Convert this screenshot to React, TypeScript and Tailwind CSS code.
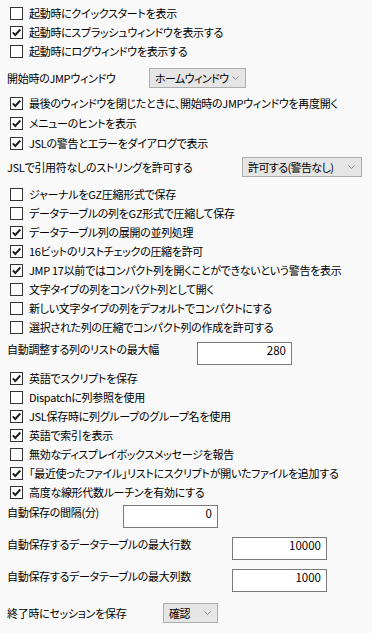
import React from "react";

const Chevron = () => (
  <svg width="7" height="4" viewBox="0 0 7 4" className="shrink-0">
    <path d="M0.5 0.5 L3.5 3.5 L6.5 0.5" fill="none" stroke="#8a8a8a" strokeWidth="1" />
  </svg>
);

const Check = ({ checked, label, h = "h-[19px]" }: { checked?: boolean; label: string; h?: string }) => (
  <div className={`${h} flex items-center pl-[10px] gap-[6px]`}>
    <div className="w-[13px] h-[13px] border border-[#333333] bg-white flex items-center justify-center shrink-0">
      {checked && (
        <svg width="11" height="11" viewBox="0 0 11 11">
          <path d="M1.8 5.4 L4.3 8 L9.3 2.5" fill="none" stroke="#1e1e1e" strokeWidth="1.9" />
        </svg>
      )}
    </div>
    <span className="whitespace-nowrap">{label}</span>
  </div>
);

const Select = ({ label, value, labelW, selW, mt }: { label: string; value: string; labelW: string; selW: string; mt: string }) => (
  <div className={`flex items-center pl-[7px] ${mt}`}>
    <span className={`${labelW} whitespace-nowrap`}>{label}</span>
    <div className={`${selW} h-[20px] border border-[#adadad] bg-[#e5e5e5] flex items-center justify-between pl-[5px] pr-[6px] overflow-hidden`}>
      <span className="whitespace-nowrap leading-[14px] tracking-[-0.6px]">{value}</span>
      <Chevron />
    </div>
  </div>
);

const NumInput = ({ label, value, labelW, mt }: { label: string; value: string; labelW: string; mt: string }) => (
  <div className={`flex items-start pl-[7px] ${mt}`}>
    <span className={`${labelW} whitespace-nowrap leading-[14px]`}>{label}</span>
    <div className="w-[95px] h-[23px] border border-[#7a7a7a] bg-white text-right pr-[5px] pt-[1px] leading-[12px] text-[11.5px] tracking-[0px]">
      {value}
    </div>
  </div>
);

export default function App() {
  return (
    <div className="w-[372px] h-[633px] bg-[#f9f9f9] text-black text-[11px] tracking-[-0.3px] font-['Noto_Sans_CJK_JP',sans-serif] [font-feature-settings:'palt'] flex flex-col pt-[4px] overflow-hidden">
      <Check label="起動時にクイックスタートを表示" />
      <Check checked label="起動時にスプラッシュウィンドウを表示する" />
      <Check label="起動時にログウィンドウを表示する" />
      <Select label="開始時のJMPウィンドウ" value="ホームウィンドウ" labelW="w-[142px]" selW="w-[97px]" mt="mt-[7px]" />
      <div className="mt-[5px] flex flex-col">
        <Check checked h="h-[20px]" label="最後のウィンドウを閉じたときに、開始時のJMPウィンドウを再度開く" />
        <Check checked h="h-[20px]" label="メニューのヒントを表示" />
        <Check checked h="h-[20px]" label="JSLの警告とエラーをダイアログで表示" />
      </div>
      <Select label="JSLで引用符なしのストリングを許可する" value="許可する(警告なし)" labelW="w-[235px]" selW="w-[120px]" mt="mt-[4px]" />
      <div className="mt-[8px] flex flex-col">
        <Check label="ジャーナルをGZ圧縮形式で保存" />
        <Check label="データテーブルの列をGZ形式で圧縮して保存" />
        <Check checked label="データテーブル列の展開の並列処理" />
        <Check checked label="16ビットのリストチェックの圧縮を許可" />
        <Check checked label="JMP 17以前ではコンパクト列を開くことができないという警告を表示" />
        <Check label="文字タイプの列をコンパクト列として開く" />
        <Check label="新しい文字タイプの列をデフォルトでコンパクトにする" />
        <Check label="選択された列の圧縮でコンパクト列の作成を許可する" />
      </div>
      <NumInput label="自動調整する列のリストの最大幅" value="280" labelW="w-[190px]" mt="mt-[5px]" />
      <div className="mt-[4px] flex flex-col">
        <Check checked label="英語でスクリプトを保存" />
        <Check label="Dispatchに列参照を使用" />
        <Check checked label="JSL保存時に列グループのグループ名を使用" />
        <Check checked label="英語で索引を表示" />
        <Check label="無効なディスプレイボックスメッセージを報告" />
        <Check checked label="「最近使ったファイル」リストにスクリプトが開いたファイルを追加する" />
        <Check checked label="高度な線形代数ルーチンを有効にする" />
      </div>
      <NumInput label="自動保存の間隔(分)" value="0" labelW="w-[116px]" mt="mt-[3px]" />
      <NumInput label="自動保存するデータテーブルの最大行数" value="10000" labelW="w-[225px]" mt="mt-[9px]" />
      <NumInput label="自動保存するデータテーブルの最大列数" value="1000" labelW="w-[225px]" mt="mt-[9px]" />
      <Select label="終了時にセッションを保存" value="確認" labelW="w-[156px]" selW="w-[55px]" mt="mt-[11px]" />
    </div>
  );
}
